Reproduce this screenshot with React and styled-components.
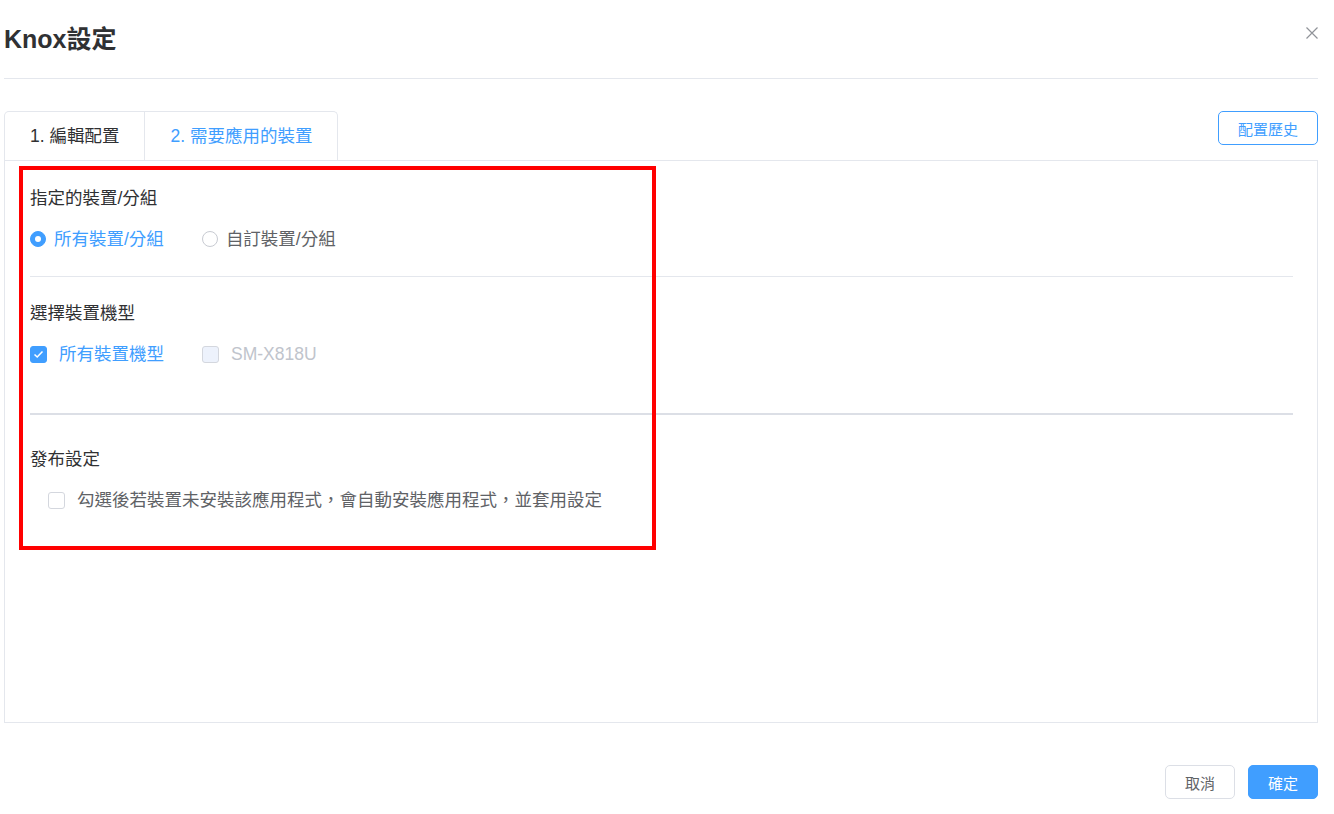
import styled, { createGlobalStyle } from "styled-components";

const GlobalStyle = createGlobalStyle`
    html, body {
        margin: 0;
        padding: 0;
        background: #fff;
    }
    body {
        font-family: "Liberation Sans", "Noto Sans CJK TC", sans-serif;
        color: #303133;
    }
    * {
        box-sizing: border-box;
    }
`;

const Dialog = styled.div`
    width: 1334px;
    height: 814px;
    padding: 0 16px 0 4px;
    display: flex;
    flex-direction: column;
`;
const Header = styled.div`
    height: 79px;
    display: flex;
    justify-content: space-between;
    align-items: flex-start;
    border-bottom: 1px solid #e4e7ed;
`;
const Title = styled.h1`
    margin: 0;
    padding-top: 24px;
    font-size: 25px;
    line-height: 30px;
    font-weight: 700;
    color: #303133;
`;
const CloseButton = styled.button`
    border: none;
    background: transparent;
    padding: 0;
    margin: 27px 0 0 0;
    width: 12px;
    height: 12px;
    display: flex;
    cursor: pointer;
`;
const TabBar = styled.div`
    margin-top: 32px;
    display: flex;
    justify-content: space-between;
    align-items: flex-start;
`;
const TabList = styled.div`
    display: flex;
    height: 49px;
    border: 1px solid #e4e7ed;
    border-bottom: none;
    border-radius: 5px 5px 0 0;
`;
const Tab = styled.div`
    padding: 0 25px;
    line-height: 48px;
    font-size: 17.5px;
    color: ${(props) => (props.active ? "#409eff" : "#303133")};
    & + & {
        border-left: 1px solid #e4e7ed;
    }
`;
const Button = styled.button`
    font-family: "Liberation Sans", "Noto Sans CJK TC", sans-serif;
    height: 34px;
    padding: 0 19px;
    font-size: 15px;
    border-radius: 5px;
    cursor: pointer;
    border: 1px solid ${(props) => (props.primary ? "#409eff" : props.outline ? "#409eff" : "#dcdfe6")};
    background: ${(props) => (props.primary ? "#409eff" : "#fff")};
    color: ${(props) => (props.primary ? "#fff" : props.outline ? "#409eff" : "#606266")};
`;
const Panel = styled.div`
    position: relative;
    height: 563px;
    border: 1px solid #e4e7ed;
    padding: 26px 24px 0 25px;
`;
const Highlight = styled.div`
    position: absolute;
    left: 14px;
    top: 5px;
    width: 637px;
    height: 384px;
    border: 4px solid #ff0000;
    pointer-events: none;
`;
const SectionTitle = styled.div`
    font-size: 17.5px;
    line-height: 22px;
    color: #303133;
    margin-top: ${(props) => props.top || 0}px;
`;
const OptionRow = styled.div`
    display: flex;
    align-items: center;
    height: 22px;
    margin-top: 19px;
    padding-left: ${(props) => props.indent || 0}px;
`;
const Option = styled.label`
    display: flex;
    align-items: center;
    margin-right: 38px;
    font-size: 17.5px;
    line-height: 22px;
    color: ${(props) =>
        props.disabled ? "#c0c4cc" : props.checked ? "#409eff" : "#606266"};
`;
const RadioDot = styled.span`
    width: 16px;
    height: 16px;
    border-radius: 50%;
    margin-right: 8px;
    display: flex;
    align-items: center;
    justify-content: center;
    border: 1px solid ${(props) => (props.checked ? "#409eff" : "#c8cbd2")};
    background: ${(props) => (props.checked ? "#409eff" : "#fff")};
    &::after {
        content: "";
        width: 6px;
        height: 6px;
        border-radius: 50%;
        background: #fff;
    }
`;
const CheckBox = styled.span`
    width: 17px;
    height: 17px;
    border-radius: 3px;
    margin-right: 12px;
    display: flex;
    align-items: center;
    justify-content: center;
    border: 1px solid
        ${(props) =>
            props.checked ? "#409eff" : "#d4d7de"};
    background: ${(props) =>
        props.checked ? "#409eff" : props.disabled ? "#edf2fc" : "#fff"};
`;
const Divider = styled.div`
    height: ${(props) => props.thick || 1}px;
    background: ${(props) => (props.thick ? "#dcdfe6" : "#e4e7ed")};
    margin-top: ${(props) => props.top}px;
`;
const Footer = styled.div`
    margin-top: 42px;
    display: flex;
    justify-content: flex-end;
    gap: 13px;
`;

function Radio({ checked, children }) {
    return (
        <Option checked={checked}>
            <RadioDot checked={checked} />
            {children}
        </Option>
    );
}

function Check({ checked, disabled, children }) {
    return (
        <Option checked={checked} disabled={disabled}>
            <CheckBox checked={checked} disabled={disabled}>
                {checked && (
                    <svg width="11" height="9" viewBox="0 0 11 9">
                        <polyline
                            points="1.5,4.5 4.2,7 9.5,1.5"
                            fill="none"
                            stroke="#fff"
                            strokeWidth="1.5"
                        />
                    </svg>
                )}
            </CheckBox>
            {children}
        </Option>
    );
}

export default function App() {
    return (
        <>
            <GlobalStyle />
            <Dialog>
                <Header>
                    <Title>Knox設定</Title>
                    <CloseButton aria-label="close">
                        <svg width="12" height="12" viewBox="0 0 12 12">
                            <path
                                d="M0.5 0.5 L11.5 11.5 M11.5 0.5 L0.5 11.5"
                                stroke="#909399"
                                strokeWidth="1.2"
                            />
                        </svg>
                    </CloseButton>
                </Header>
                <TabBar>
                    <TabList>
                        <Tab>1. 編輯配置</Tab>
                        <Tab active>2. 需要應用的裝置</Tab>
                    </TabList>
                    <Button outline>配置歷史</Button>
                </TabBar>
                <Panel>
                    <SectionTitle>指定的裝置/分組</SectionTitle>
                    <OptionRow>
                        <Radio checked>所有裝置/分組</Radio>
                        <Radio>自訂裝置/分組</Radio>
                    </OptionRow>
                    <Divider top={26} />
                    <SectionTitle top={25}>選擇裝置機型</SectionTitle>
                    <OptionRow>
                        <Check checked>所有裝置機型</Check>
                        <Check disabled>SM-X818U</Check>
                    </OptionRow>
                    <Divider top={48} thick={2} />
                    <SectionTitle top={33}>發布設定</SectionTitle>
                    <OptionRow indent={18}>
                        <Check>勾選後若裝置未安裝該應用程式，會自動安裝應用程式，並套用設定</Check>
                    </OptionRow>
                    <Highlight />
                </Panel>
                <Footer>
                    <Button>取消</Button>
                    <Button primary>確定</Button>
                </Footer>
            </Dialog>
        </>
    );
}
